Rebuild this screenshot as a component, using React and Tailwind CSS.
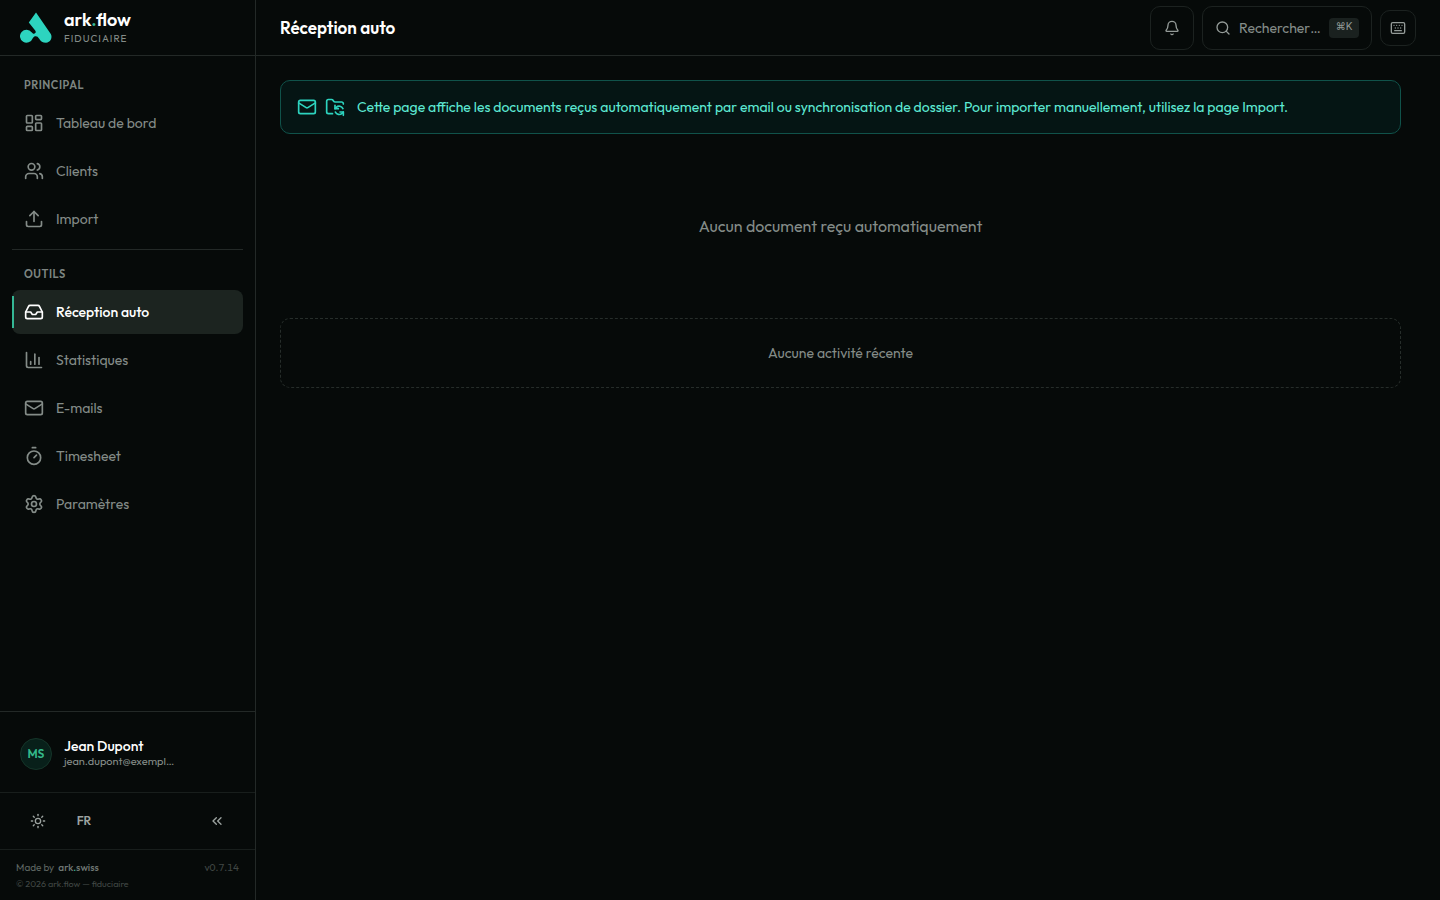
import React from "react";
import {
  Bell,
  ChartColumn,
  ChevronsLeft,
  FolderSync,
  Inbox,
  Keyboard,
  LayoutDashboard,
  Mail,
  Search,
  Settings,
  Sun,
  Timer,
  Upload,
  Users,
} from "lucide-react";

const mainLinks = [
  { label: "Tableau de bord", icon: LayoutDashboard },
  { label: "Clients", icon: Users },
  { label: "Import", icon: Upload },
];

const toolLinks = [
  { label: "Réception auto", icon: Inbox, active: true },
  { label: "Statistiques", icon: ChartColumn },
  { label: "E-mails", icon: Mail },
  { label: "Timesheet", icon: Timer },
  { label: "Paramètres", icon: Settings },
];

function Logo() {
  return (
    <svg viewBox="0 0 32 32" className="size-8" fill="#2dd4bf" aria-hidden="true">
      <path d="M16 0.4 L30.8 22 A6 6 0 0 1 26 30.8 C22.5 30.8 20.7 29.2 19.2 26.8 C18 24.9 17.2 24.2 15.8 24.2 C14.4 24.2 13.6 24.8 12.6 26.4 A6.5 6.5 0 1 1 11.6 20.2 C12.6 21.6 14 22.3 15.3 21.1 C16 20.3 15.8 19.6 15.2 18.6 L8.8 10.6 Z" />
    </svg>
  );
}

function NavItem({ label, icon: Icon, active }) {
  return (
    <li>
      <a
        href="#"
        aria-current={active ? "page" : undefined}
        className={`relative flex h-11 items-center gap-3 rounded-lg px-3 text-sm ${
          active ? "bg-[#1c2420] font-medium text-white" : "text-[#848c88]"
        }`}
      >
        {active && (
          <span className="absolute inset-y-1.5 left-0 w-0.5 bg-[#34b795]" />
        )}
        <Icon size={20} />
        {label}
      </a>
    </li>
  );
}

function NavSection({ title, links }) {
  return (
    <section>
      <h2 className="px-3 pb-2 text-[11px] leading-4 font-semibold tracking-wider text-[#7d8581] uppercase">
        {title}
      </h2>
      <ul className="flex flex-col gap-1">
        {links.map((link) => (
          <NavItem key={link.label} {...link} />
        ))}
      </ul>
    </section>
  );
}

function Sidebar() {
  return (
    <aside className="flex w-64 shrink-0 flex-col border-r border-[#232927]">
      <div className="flex h-14 items-center gap-3 border-b border-[#232927] px-5">
        <Logo />
        <div className="pt-px">
          <p className="text-lg leading-5 font-semibold text-white">
            ark<span className="text-[#34b795]">.</span>flow
          </p>
          <p className="mt-px text-[10px] leading-4 tracking-widest text-[#848c88]">
            FIDUCIAIRE
          </p>
        </div>
      </div>

      <nav className="flex-1 px-3 pt-[21px]">
        <NavSection title="Principal" links={mainLinks} />
        <hr className="mt-2 mb-4 border-[#232927]" />
        <NavSection title="Outils" links={toolLinks} />
      </nav>

      <div className="flex h-[81px] items-center gap-3 border-t border-[#232927] px-5 pt-1">
        <span className="flex size-8 items-center justify-center rounded-full border border-[#153529] bg-[#08201a] text-xs font-semibold text-[#34b98a]">
          MS
        </span>
        <div className="pb-0.5">
          <p className="text-sm leading-4 font-medium text-white">Jean Dupont</p>
          <p className="text-[11px] leading-[14px] text-[#848c88]">jean.dupont@exempl…</p>
        </div>
      </div>

      <div className="flex h-[57px] items-center border-t border-[#181e1c] px-4 text-[#9ca3a0]">
        <button type="button" aria-label="Thème" className="flex size-11 items-center justify-center">
          <Sun size={16} />
        </button>
        <button type="button" className="ml-0.5 size-11 text-xs font-semibold">
          FR
        </button>
        <button type="button" aria-label="Réduire" className="ml-auto flex size-11 items-center justify-center">
          <ChevronsLeft size={16} />
        </button>
      </div>

      <footer className="h-[51px] border-t border-[#181e1c] px-4 pt-2.5 text-[10px] leading-4 text-[#5c6460]">
        <div className="flex justify-between">
          <p>
            Made by{" "}
            <a href="#" className="ml-0.5 font-medium text-[#717975]">
              ark<span className="text-[#34b795]">.</span>swiss
            </a>
          </p>
          <p className="text-[#414845] tabular-nums">v0.7.14</p>
        </div>
        <p className="text-[9px] text-[#414845]">© 2026 ark.flow — fiduciaire</p>
      </footer>
    </aside>
  );
}

function Topbar() {
  return (
    <header className="flex h-14 items-center justify-between border-b border-[#232927] px-6">
      <h1 className="text-[17px] font-semibold text-white">Réception auto</h1>
      <div className="flex items-center gap-2 text-[#949b98]">
        <button
          type="button"
          aria-label="Notifications"
          className="flex size-11 items-center justify-center rounded-[10px] border border-[#1c2220]"
        >
          <Bell size={16} />
        </button>
        <button
          type="button"
          className="flex h-11 items-center gap-2 rounded-[10px] border border-[#1c2220] px-3 text-sm"
        >
          <Search size={16} />
          <span className="w-[82px] text-left whitespace-nowrap text-[#848c88]">Rechercher…</span>
          <kbd className="flex h-5 w-[30px] items-center justify-center rounded bg-[#1a211f] pb-0.5 font-[Inter,'DejaVu_Sans',sans-serif] text-[10px]">
            ⌘K
          </kbd>
        </button>
        <button
          type="button"
          aria-label="Raccourcis clavier"
          className="flex size-9 items-center justify-center rounded-[10px] border border-[#1c2220]"
        >
          <Keyboard size={16} />
        </button>
      </div>
    </header>
  );
}

export default function App() {
  return (
    <div className="flex min-h-screen bg-[#060a09] font-[Outfit,Lato,sans-serif]">
      <Sidebar />
      <div className="flex min-w-0 flex-1 flex-col">
        <Topbar />
        <main className="flex-1 py-6 pr-[39px] pl-6">
          <div className="flex h-[54px] items-center gap-3 rounded-[10px] border border-[#10524a] bg-[#051514] px-4 text-[#5eead4]">
            <span className="flex gap-2 text-[#2dd4bf]">
              <Mail size={20} />
              <FolderSync size={20} />
            </span>
            <p className="text-sm">
              Cette page affiche les documents reçus automatiquement par email ou
              synchronisation de dossier. Pour importer manuellement, utilisez la page
              Import.
            </p>
          </div>

          <p className="py-20 text-center text-base text-[#848c88]">
            Aucun document reçu automatiquement
          </p>

          <p className="rounded-[10px] border border-dashed border-[#262d2a] py-6 text-center text-sm text-[#848c88]">
            Aucune activité récente
          </p>
        </main>
      </div>
    </div>
  );
}
